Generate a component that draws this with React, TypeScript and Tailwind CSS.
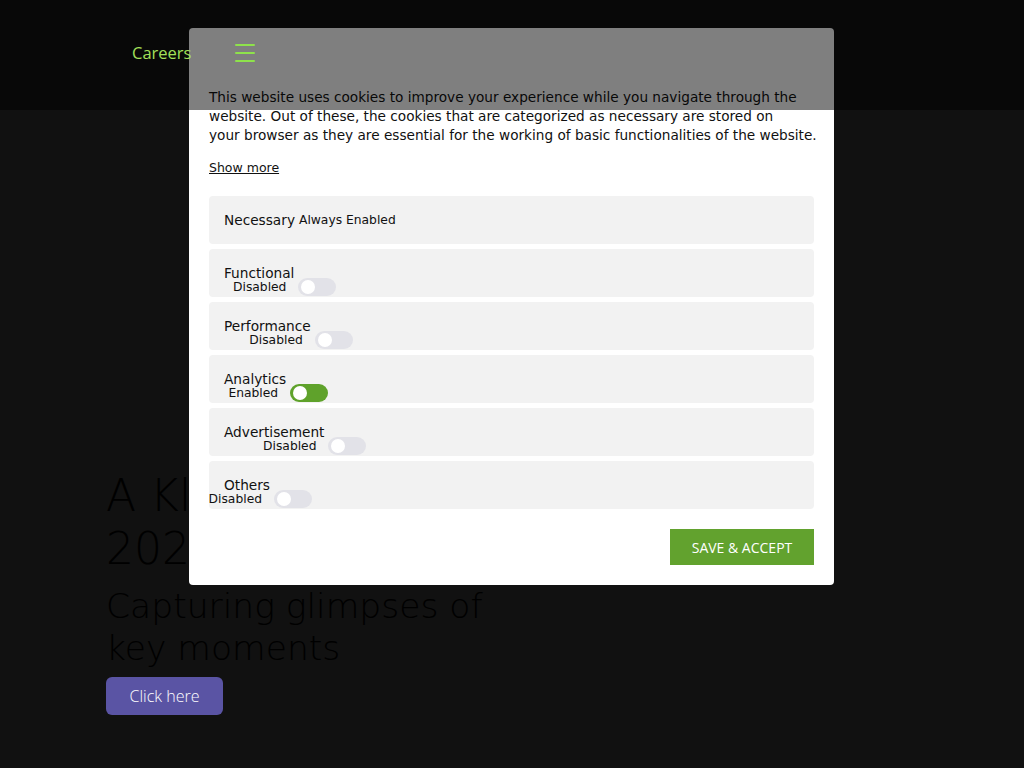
const sans = { fontFamily: '"DejaVu Sans", Verdana, sans-serif' };
const geo = { fontFamily: '"Open Sans", Lato, sans-serif' };

type Category = { name: string; enabled: boolean };

const categories: Category[] = [
  { name: "Functional", enabled: false },
  { name: "Performance", enabled: false },
  { name: "Analytics", enabled: true },
  { name: "Advertisement", enabled: false },
  { name: "Others", enabled: false },
];

function Toggle({ on }: { on: boolean }) {
  return (
    <span
      className={`flex h-[18px] w-[38px] items-center rounded-full px-[3px] ${
        on ? "bg-[#5fa22b]" : "bg-[#e2e2e8]"
      }`}
    >
      <span className="h-[14px] w-[14px] rounded-full bg-white" />
    </span>
  );
}

function CategoryRow({ item }: { item: Category }) {
  return (
    <div className="flex h-12 items-center rounded bg-[#f2f2f2] pl-[15px] text-[#111]">
      <span className="relative inline-block text-[13.7px] leading-[17px]">
        {item.name}
        {/* misaligned switch block sits under the title, overlapping the row */}
        <span className="absolute left-full top-[13px] ml-1 flex items-center">
          <span className="absolute right-full mr-3 whitespace-nowrap text-[12.3px] leading-[18px]">
            {item.enabled ? "Enabled" : "Disabled"}
          </span>
          <Toggle on={item.enabled} />
        </span>
      </span>
    </div>
  );
}

export default function App() {
  return (
    <div className="relative min-h-screen overflow-hidden bg-[#111111]" style={geo}>
      {/* Header, drawn over the consent modal */}
      <header className="relative z-20 flex h-[110px] items-center bg-black/50 pb-1 pl-[132px]">
        <span className="text-[16.5px] text-[#a3e05a]">Careers</span>
        <button type="button" className="ml-[44px] flex flex-col gap-[6px]" aria-label="Menu">
          <span className="block h-[2px] w-[20px] rounded bg-[#8ee24b]" />
          <span className="block h-[2px] w-[20px] rounded bg-[#8ee24b]" />
          <span className="block h-[2px] w-[20px] rounded bg-[#8ee24b]" />
        </button>
      </header>

      {/* Hero */}
      <section className="pl-[106px] pt-[359px]" style={sans}>
        <h1 className="w-[420px] text-[44px] font-light leading-[53px] text-black">
          A Klimpse into 2023
        </h1>
        <h2 className="mt-[10px] w-[420px] text-[34.5px] font-light leading-[42px] text-black">
          Capturing glimpses of key moments
        </h2>
        <button
          type="button"
          className="mt-2 h-[38px] w-[117px] rounded-md bg-[#5a54a4] text-[16px] font-light text-white"
          style={geo}
        >
          Click here
        </button>
      </section>

      {/* Cookie consent modal */}
      <div
        className="absolute left-[189px] top-[28px] z-10 w-[645px] rounded-sm bg-white px-5 pb-5 pt-[60px]"
        style={sans}
      >
        <p className="-mr-2 whitespace-nowrap text-[13.65px] leading-[19px] text-[#111]">
          This website uses cookies to improve your experience while you navigate through the
          <br />
          website. Out of these, the cookies that are categorized as necessary are stored on
          <br />
          your browser as they are essential for the working of basic functionalities of the
          website.
        </p>
        <a className="mt-[14px] inline-block text-[12.5px] leading-[18px] text-[#111] underline">
          Show more
        </a>

        <div className="mt-[17px] flex flex-col gap-[5px]">
          <div className="flex h-12 items-center rounded bg-[#f2f2f2] pl-[15px] text-[#111]">
            <span className="text-[13.7px]">Necessary</span>
            <span className="ml-1 text-[12.3px]">Always Enabled</span>
          </div>
          {categories.map((c) => (
            <CategoryRow key={c.name} item={c} />
          ))}
        </div>

        <div className="mt-5 flex justify-end">
          <button
            type="button"
            className="h-9 w-[144px] bg-[#62a22e] text-[14px] text-white"
            style={geo}
          >
            SAVE &amp; ACCEPT
          </button>
        </div>
      </div>
    </div>
  );
}
